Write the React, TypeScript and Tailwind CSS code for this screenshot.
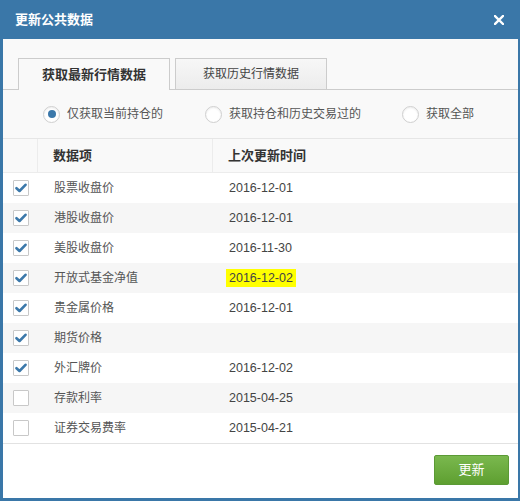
import React from 'react';

interface Row {
  name: string;
  date: string;
  checked: boolean;
  highlight?: boolean;
}

const rows: Row[] = [
  { name: '股票收盘价', date: '2016-12-01', checked: true },
  { name: '港股收盘价', date: '2016-12-01', checked: true },
  { name: '美股收盘价', date: '2016-11-30', checked: true },
  { name: '开放式基金净值', date: '2016-12-02', checked: true, highlight: true },
  { name: '贵金属价格', date: '2016-12-01', checked: true },
  { name: '期货价格', date: '', checked: true },
  { name: '外汇牌价', date: '2016-12-02', checked: true },
  { name: '存款利率', date: '2015-04-25', checked: false },
  { name: '证券交易费率', date: '2015-04-21', checked: false },
];

const font = "font-['Liberation_Sans','Noto_Sans_CJK_SC',sans-serif]";

const Checkbox: React.FC<{ checked: boolean }> = ({ checked }) => (
  <span className="w-[16px] h-[16px] border border-[#c8c8c8] bg-white flex items-center justify-center rounded-[1px]">
    {checked && (
      <svg width="12" height="10" viewBox="0 0 12 10">
        <path d="M1.5 5.2 L4.5 8 L10.5 1.8" fill="none" stroke="#3b78aa" strokeWidth="2.6" strokeLinecap="round" strokeLinejoin="round" />
      </svg>
    )}
  </span>
);

const Radio: React.FC<{ checked?: boolean; label: string }> = ({ checked, label }) => (
  <label className="flex items-center gap-[7px]">
    <span className="w-[17px] h-[17px] rounded-full border border-[#cfcfcf] bg-white shadow-[inset_0_1px_2px_rgba(0,0,0,0.08)] flex items-center justify-center">
      {checked && <span className="w-[8px] h-[8px] rounded-full bg-[#3b78aa]" />}
    </span>
    <span className="text-[12px] text-[#555]">{label}</span>
  </label>
);

export default function App() {
  return (
    <div className={`w-[520px] h-[501px] bg-[#3a77a8] flex flex-col ${font}`}>
      <div className="h-[39px] flex items-center justify-between pl-[15px] pr-[16px]">
        <span className="text-white font-bold text-[13px]">更新公共数据</span>
        <svg width="10" height="10" viewBox="0 0 10 10">
          <path d="M1 1 L9 9 M9 1 L1 9" stroke="#fff" strokeWidth="2.4" strokeLinecap="square" />
        </svg>
      </div>
      <div className="flex-1 ml-[3px] mr-[2px] mb-[3px] bg-[#f9f9f9] flex flex-col">
        <div className="pt-[19px] pl-[15px] flex items-end gap-[5px] border-b border-[#cccccc] h-[51px]">
          <div className="w-[152px] h-[32px] -mb-px border border-b-0 border-[#cccccc] bg-[#f9f9f9] flex items-center justify-center text-[13px] font-bold text-[#333]">
            获取最新行情数据
          </div>
          <div className="w-[152px] h-[31px] border border-b-0 border-[#cccccc] bg-gradient-to-b from-[#f7f7f7] to-[#ececec] flex items-center justify-center text-[12px] text-[#444]">
            获取历史行情数据
          </div>
        </div>
        <div className="h-[48px] flex items-center pl-[40px]">
          <div className="w-[162px]"><Radio checked label="仅获取当前持仓的" /></div>
          <div className="w-[197px]"><Radio label="获取持仓和历史交易过的" /></div>
          <Radio label="获取全部" />
        </div>
        <div className="border-t border-[#e6e6e6]">
          <div className="flex h-[34px] text-[13px] font-bold text-[#333] border-b border-[#ececec]">
            <div className="w-[35px] border-r border-[#ececec]" />
            <div className="w-[175px] border-r border-[#ececec] flex items-center pl-[15px]">数据项</div>
            <div className="flex-1 flex items-center pl-[15px]">上次更新时间</div>
          </div>
          {rows.map((r, i) => (
            <div key={r.name} className={`flex h-[30px] items-center ${i % 2 === 0 ? 'bg-white' : 'bg-[#f6f6f6]'}`}>
              <div className="w-[35px] pl-[10px] flex items-center"><Checkbox checked={r.checked} /></div>
              <div className="w-[175px] pl-[16px] text-[12px] text-[#555]">{r.name}</div>
              <div className="flex-1 pl-[16px] text-[12.5px] text-[#444]">
                {r.highlight ? (
                  <span className="bg-[#ffff00] px-[3px] py-[2px] -ml-[3px]">{r.date}</span>
                ) : (
                  r.date
                )}
              </div>
            </div>
          ))}
        </div>
        <div className="flex-1 bg-white border-t border-[#e2e2e2] flex items-start justify-end pt-[11px] pr-[9px]">
          <button className="w-[75px] h-[30px] rounded-[2px] border border-[#5b9a35] bg-gradient-to-b from-[#7ab84e] to-[#5e9f30] text-white text-[13px]">
            更新
          </button>
        </div>
      </div>
    </div>
  );
}
